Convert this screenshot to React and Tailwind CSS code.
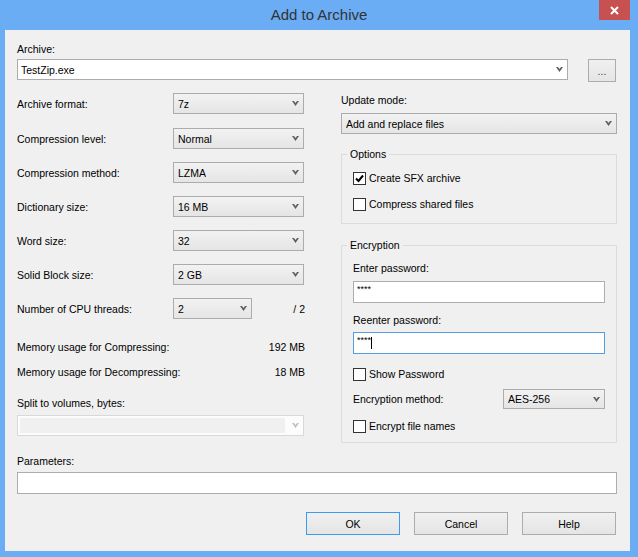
import React from "react";

function Chevron({ disabled }) {
  return (
    <svg width="7" height="5" viewBox="0 0 7 5" className="shrink-0">
      <polygon
        points="0,0 2,0 3.5,2 5,0 7,0 3.5,5"
        fill={disabled ? "#bfbfbf" : "#606060"}
      />
    </svg>
  );
}

function Combo({ value, className = "", white = false }) {
  return (
    <div
      className={
        "flex items-center justify-between border pr-[4px] " +
        (white
          ? "bg-white border-[#acacac] pl-[3px] "
          : "bg-linear-to-b from-[#f2f2f2] to-[#e5e5e5] border-[#acacac] pl-[4px] ") +
        className
      }
    >
      <span className="truncate">{value}</span>
      <Chevron />
    </div>
  );
}

function Checkbox({ checked, label, className = "" }) {
  return (
    <div className={"flex items-center h-[14px] " + className}>
      <div className="w-[13px] h-[13px] border border-[#333] bg-white flex items-center justify-center shrink-0">
        {checked ? (
          <svg width="11" height="11" viewBox="0 0 11 11">
            <polyline
              points="2,5.5 4.5,8 9,2.5"
              fill="none"
              stroke="#000"
              strokeWidth="2"
            />
          </svg>
        ) : null}
      </div>
      <span className="ml-[3px]">{label}</span>
    </div>
  );
}

function Button({ children, className = "", primary = false }) {
  return (
    <button
      type="button"
      className={
        "h-[23px] border bg-linear-to-b from-[#f0f0f0] to-[#e5e5e5] flex items-center justify-center " +
        (primary ? "border-[#3c9af0] " : "border-[#acacac] ") +
        className
      }
    >
      {children}
    </button>
  );
}

function Row({ label, children, className = "" }) {
  return (
    <div className={"flex items-center h-[21px] " + className}>
      <span className="w-[156px] shrink-0">{label}</span>
      {children}
    </div>
  );
}

export default function App() {
  return (
    <div className="w-[638px] h-[557px] bg-[#6badf4] font-['Liberation_Sans',Arial,sans-serif] text-[10.5px] leading-[14px] text-black flex flex-col overflow-hidden select-none">
      {/* title bar */}
      <div className="h-[30px] shrink-0 flex items-start">
        <div className="w-[39px] shrink-0" />
        <div className="flex-1 h-[30px] flex items-center justify-center text-[15px] text-[#333]">
          Add to Archive
        </div>
        <div className="w-[31px] h-[20px] bg-[#c75050] flex items-center justify-center shrink-0">
          <svg width="9" height="9" viewBox="0 0 9 9">
            <path d="M1 1 L8 8 M8 1 L1 8" stroke="#fff" strokeWidth="2" />
          </svg>
        </div>
        <div className="w-[8px] shrink-0" />
      </div>

      {/* client area */}
      <div className="ml-[5px] w-[625px] h-[521px] bg-[#f0f0f0] pl-[12px] pt-[12px]">
        <div className="h-[14px]">Archive:</div>
        <div className="mt-[3px] flex items-start">
          <Combo white value="TestZip.exe" className="w-[551px] h-[21px]" />
          <Button className="ml-[20px] w-[28px] text-[#444]">...</Button>
        </div>

        <div className="flex items-start">
          {/* left column */}
          <div className="w-[288px] flex flex-col">
            <Row label="Archive format:" className="mt-[11px]">
              <Combo value="7z" className="w-[131px] h-[21px]" />
            </Row>
            <Row label="Compression level:" className="mt-[14px]">
              <Combo value="Normal" className="w-[131px] h-[21px]" />
            </Row>
            <Row label="Compression method:" className="mt-[13px]">
              <Combo value="LZMA" className="w-[131px] h-[21px]" />
            </Row>
            <Row label="Dictionary size:" className="mt-[13px]">
              <Combo value="16 MB" className="w-[131px] h-[21px]" />
            </Row>
            <Row label="Word size:" className="mt-[13px]">
              <Combo value="32" className="w-[131px] h-[21px]" />
            </Row>
            <Row label="Solid Block size:" className="mt-[13px]">
              <Combo value="2 GB" className="w-[131px] h-[21px]" />
            </Row>
            <Row label="Number of CPU threads:" className="mt-[13px]">
              <Combo value="2" className="w-[79px] h-[21px]" />
              <span className="flex-1 text-right">/ 2</span>
            </Row>

            <div className="mt-[21px] h-[14px] flex justify-between">
              <span>Memory usage for Compressing:</span>
              <span>192 MB</span>
            </div>
            <div className="mt-[11px] h-[14px] flex justify-between">
              <span>Memory usage for Decompressing:</span>
              <span>18 MB</span>
            </div>

            <div className="mt-[17px] h-[14px]">Split to volumes, bytes:</div>
            <div className="mt-[5px] w-[287px] h-[21px] border border-[#d9d9d9] bg-[#fcfcfc] flex items-center pl-[2px] pr-[4px]">
              <div className="w-[265px] h-[15px] bg-[#f0f0f0]" />
              <div className="flex-1" />
              <Chevron disabled />
            </div>
          </div>

          {/* right column */}
          <div className="ml-[36px] w-[276px] flex flex-col">
            <div className="mt-[11px] h-[14px]">Update mode:</div>
            <Combo value="Add and replace files" className="mt-[6px] w-[276px] h-[21px]" />

            <fieldset className="mt-[13px] border border-[#dcdcdc] pl-[5px] pr-[11px] pb-[12px]">
              <legend className="px-[3px] h-[14px]">Options</legend>
              <div className="pl-[6px]">
                <Checkbox checked label="Create SFX archive" className="mt-[10px]" />
                <Checkbox label="Compress shared files" className="mt-[12px]" />
              </div>
            </fieldset>

            <fieldset className="mt-[14px] border border-[#dcdcdc] pl-[5px] pr-[11px] pb-[9px]">
              <legend className="px-[3px] h-[14px]">Encryption</legend>
              <div className="pl-[6px] flex flex-col">
                <div className="mt-[9px] h-[14px]">Enter password:</div>
                <div className="mt-[6px] h-[22px] border border-[#abadb3] bg-white pl-[3px] pt-[1px] text-[9px] leading-[12px]">
                  ****
                </div>
                <div className="mt-[10px] h-[14px]">Reenter password:</div>
                <div className="mt-[5px] h-[22px] border border-[#569de5] bg-white pl-[3px] pt-[1px] flex items-start text-[9px] leading-[12px]">
                  <span>****</span>
                  <span className="mt-[3px] w-[1px] h-[12px] bg-black" />
                </div>
                <Checkbox label="Show Password" className="mt-[13px]" />
                <div className="mt-[8px] h-[20px] flex items-center">
                  <span className="flex-1">Encryption method:</span>
                  <Combo value="AES-256" className="w-[102px] h-[20px]" />
                </div>
                <Checkbox label="Encrypt file names" className="mt-[10px]" />
              </div>
            </fieldset>
          </div>
        </div>

        <div className="mt-[11px] h-[14px]">Parameters:</div>
        <div className="mt-[4px] w-[600px] h-[22px] border border-[#abadb3] bg-white" />

        <div className="mt-[18px] w-[599px] flex justify-end gap-[14px]">
          <Button primary className="w-[94px]">OK</Button>
          <Button className="w-[94px]">Cancel</Button>
          <Button className="w-[94px]">Help</Button>
        </div>
      </div>
    </div>
  );
}
